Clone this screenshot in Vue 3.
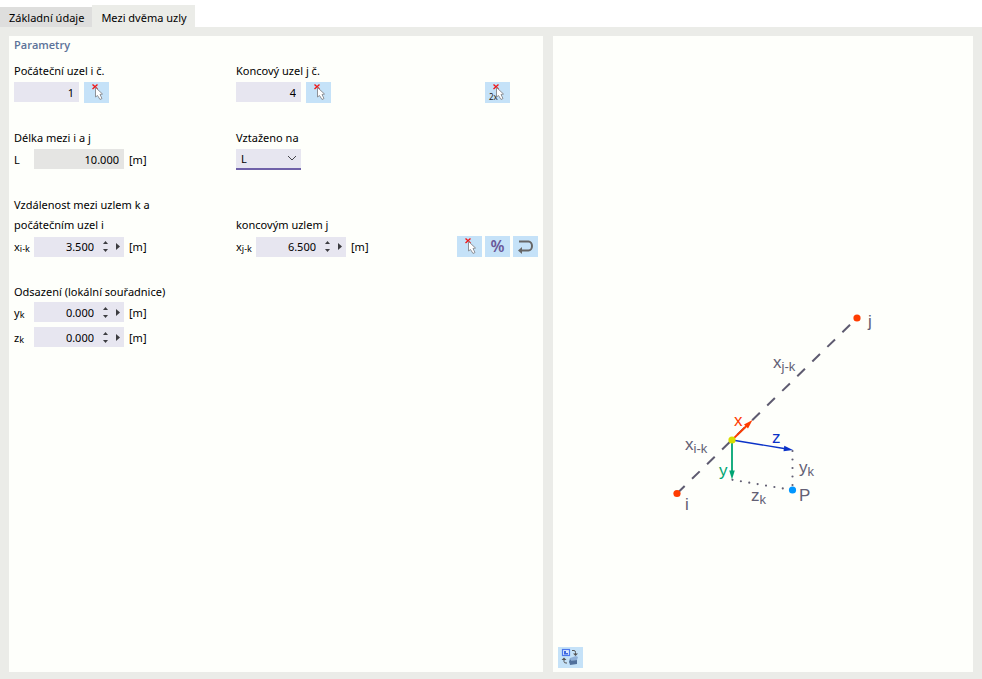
<template>
  <div class="dialog">
    <div class="tabs" role="tablist">
      <button
        v-for="tab in tabs"
        :key="tab.id"
        type="button"
        role="tab"
        class="tab"
        :class="{ active: tab.id === activeTab }"
        :aria-selected="tab.id === activeTab"
        @click="activeTab = tab.id"
      >
        {{ tab.label }}
      </button>
    </div>

    <div class="content">
      <form class="panel params" @submit.prevent>
        <h2 class="title">Parametry</h2>

        <div class="group">
          <div class="cell">
            <label class="label" for="node-i">Počáteční uzel i č.</label>
            <div class="row">
              <input id="node-i" v-model="nodeI" class="box short" type="text" />
              <button type="button" class="icon-btn" aria-label="i">
                <svg viewBox="0 0 25 21">
                  <path class="cross" d="M8.500 2.500l5 4.500M13.500 2.500l-5 4.500" />
                  <path class="cursor" :d="cursorPath" />
                </svg>
              </button>
            </div>
          </div>
          <div class="cell">
            <label class="label" for="node-j">Koncový uzel j č.</label>
            <div class="row">
              <input id="node-j" v-model="nodeJ" class="box short" type="text" />
              <button type="button" class="icon-btn" aria-label="j">
                <svg viewBox="0 0 25 21">
                  <path class="cross" d="M8.500 2.500l5 4.500M13.500 2.500l-5 4.500" />
                  <path class="cursor" :d="cursorPath" />
                </svg>
              </button>
            </div>
          </div>
          <div class="actions">
            <button type="button" class="icon-btn second" aria-label="i, j">
              <svg viewBox="0 0 25 21">
                <path class="cross" d="M8.500 2.500l5 4.500M13.500 2.500l-5 4.500" />
                <text class="twice" x="4" y="18">2x</text>
                <path class="cursor" :d="cursorPath" />
              </svg>
            </button>
          </div>
        </div>

        <div class="group">
          <div class="cell">
            <label class="label" for="length">Délka mezi i a j</label>
            <div class="row">
              <span class="symbol">L</span>
              <input id="length" class="box long" type="text" value="10.000" readonly />
              <span class="unit">[m]</span>
            </div>
          </div>
          <div class="cell">
            <label class="label" for="reference">Vztaženo na</label>
            <div class="row">
              <div class="select">
                <select id="reference" v-model="reference">
                  <option>L</option>
                </select>
                <svg class="chevron" viewBox="0 0 10 6">
                  <path d="M1 1l4 4 4-4" />
                </svg>
              </div>
            </div>
          </div>
        </div>

        <div class="group">
          <p class="label wide">Vzdálenost mezi uzlem k a</p>
          <div v-for="item in distances" :key="item.id" class="cell">
            <label class="label" :for="item.id">{{ item.label }}</label>
            <div class="row">
              <span class="symbol">x<sub>{{ item.sub }}</sub></span>
              <div class="spin">
                <input :id="item.id" v-model="item.value" type="text" />
                <div class="steps">
                  <button type="button" aria-label="+" @click="step(item, 0.1)">
                    <svg viewBox="0 0 5 3"><path d="M0 3L2.500 0 5 3z" /></svg>
                  </button>
                  <button type="button" aria-label="-" @click="step(item, -0.1)">
                    <svg viewBox="0 0 5 3"><path d="M0 0l2.500 3L5 0z" /></svg>
                  </button>
                </div>
                <button type="button" class="more" aria-label="▸">
                  <svg viewBox="0 0 4 7"><path d="M0 0l4 3.500L0 7z" /></svg>
                </button>
              </div>
              <span class="unit">[m]</span>
            </div>
          </div>
          <div class="actions">
            <button type="button" class="icon-btn" aria-label="k">
              <svg viewBox="0 0 25 21">
                <path class="cross" d="M8.500 2.500l5 4.500M13.500 2.500l-5 4.500" />
                <path class="cursor" :d="cursorPath" />
              </svg>
            </button>
            <button type="button" class="icon-btn percent">%</button>
            <button type="button" class="icon-btn" aria-label="↩">
              <svg viewBox="0 0 25 21">
                <path class="return" d="M6 5.500h9.500a3.500 4.500 0 0 1 0 9H8" />
                <path class="return-head" d="M5 14.500l4-3.500v7z" />
              </svg>
            </button>
          </div>
        </div>

        <div class="group">
          <p class="label wide">Odsazení (lokální souřadnice)</p>
          <div v-for="item in offsets" :key="item.id" class="row wide">
            <label class="symbol" :for="item.id">{{ item.axis }}<sub>k</sub></label>
            <div class="spin">
              <input :id="item.id" v-model="item.value" type="text" />
              <div class="steps">
                <button type="button" aria-label="+" @click="step(item, 0.1)">
                  <svg viewBox="0 0 5 3"><path d="M0 3L2.500 0 5 3z" /></svg>
                </button>
                <button type="button" aria-label="-" @click="step(item, -0.1)">
                  <svg viewBox="0 0 5 3"><path d="M0 0l2.500 3L5 0z" /></svg>
                </button>
              </div>
              <button type="button" class="more" aria-label="▸">
                <svg viewBox="0 0 4 7"><path d="M0 0l4 3.500L0 7z" /></svg>
              </button>
            </div>
            <span class="unit">[m]</span>
          </div>
        </div>
      </form>

      <div class="panel preview">
        <svg class="scheme" viewBox="0 0 410 611">
          <!-- origin of the group is node k -->
          <g transform="translate(174 404)">
            <path class="member" d="M-55 53.500L125 -122" />

            <path class="dots" d="M60.500 11v38M0.500 39.800L60 50" />

            <path class="axis-x" d="M0 0L16 -15.500" />
            <path class="head-x" d="M20.500 -20L16 -11.500 12 -15.500z" />
            <path class="axis-y" d="M0 0v31" />
            <path class="head-y" d="M0 39.500l-2.800-9h5.600z" />
            <path class="axis-z" d="M0 0L52 8.500" />
            <path class="head-z" d="M61 10l-9.500 1.200.8-5.400z" />

            <circle class="end" cx="-55" cy="53.500" r="3.600" />
            <circle class="end" cx="125" cy="-122" r="3.600" />
            <circle class="node-k" r="3.600" />
            <circle class="point" cx="60.500" cy="50" r="3.600" />

            <text x="-47" y="70">i</text>
            <text x="136" y="-113">j</text>
            <text x="67" y="61">P</text>
            <text x="41" y="-72">x<tspan class="sub" dy="3">j-k</tspan></text>
            <text x="-47" y="10">x<tspan class="sub" dy="3">i-k</tspan></text>
            <text x="67" y="33">y<tspan class="sub" dy="3">k</tspan></text>
            <text x="19" y="61">z<tspan class="sub" dy="3">k</tspan></text>
            <text class="text-x" x="2" y="-14">x</text>
            <text class="text-y" x="-13" y="36">y</text>
            <text class="text-z" x="40" y="3">z</text>
          </g>
        </svg>
        <button type="button" class="icon-btn" aria-label="⇄">
          <svg viewBox="0 0 25 21">
            <rect class="frame" x="4.500" y="2.500" width="7" height="6" />
            <path class="frame-fill" d="M6 4h2v2h2v1.500H6z" />
            <path class="swap" d="M14 3.500h2q1.500 0 1.500 2v2M6 12v2.500q0 1.500 2 1.500h1" />
            <path class="swap-head" d="M15 6.500h5L17.500 9zM3.500 13L6 10.500 8.500 13z" />
            <path class="solid-light" d="M12 11l6-2 2 1-1 3-6 1z" />
            <path class="solid-dark" d="M11 14l8-1v4l-7 1zM12 11l1 3-2 2z" />
          </svg>
        </button>
      </div>
    </div>
  </div>
</template>

<script setup>
import { ref } from "vue";

const tabs = [
  { id: "base", label: "Základní údaje" },
  { id: "between", label: "Mezi dvěma uzly" },
];
const activeTab = ref("between");

const nodeI = ref("1");
const nodeJ = ref("4");
const reference = ref("L");

const distances = ref([
  { id: "x-ik", label: "počátečním uzel i", sub: "i-k", value: "3.500" },
  { id: "x-jk", label: "koncovým uzlem j", sub: "j-k", value: "6.500" },
]);

const offsets = ref([
  { id: "y-k", axis: "y", value: "0.000" },
  { id: "z-k", axis: "z", value: "0.000" },
]);

const cursorPath = "M11.500 5.500v9.500l2-1.500 2.500 4 2-1-2-4 2.500-.5z";

const step = (item, delta) => {
  item.value = (Number(item.value) + delta).toFixed(3);
};
</script>

<style>
body {
  margin: 0;
  background: #fff;
}
</style>

<style scoped>
.dialog {
  display: flex;
  flex-direction: column;
  min-height: 100vh;
  box-sizing: border-box;
  padding-top: 5px;
  font-family: "Noto Sans", "Open Sans", sans-serif;
  font-size: 11px;
  color: #000;
}

button,
input,
select {
  margin: 0;
  padding: 0;
  border: 0;
  border-radius: 0;
  background: none;
  font: inherit;
  color: inherit;
}

svg {
  display: block;
}

.tabs {
  display: flex;
  align-items: flex-end;
}

.tab {
  height: 20px;
  padding: 0 8px 0 9px;
  background: #dededd;
}

.tab.active {
  height: 22px;
  padding-top: 2px;
  background: #ebece8;
}

.content {
  flex: 1;
  display: grid;
  grid-template-columns: minmax(0, 534fr) minmax(0, 420fr);
  gap: 10px;
  padding: 9px 9px 7px;
  background: #ebece8;
}

.panel {
  box-sizing: border-box;
  padding: 0 5px 4px;
  background: #fefffb;
}

.title {
  margin: 0 0 7px;
  font-family: "Open Sans", "Noto Sans", sans-serif;
  font-size: 11px;
  line-height: 18px;
  font-weight: 600;
  color: #5b7299;
}

.group {
  display: grid;
  grid-template-columns: 222px 1fr auto;
  margin-bottom: 25px;
}

.label {
  display: block;
  margin: 0 0 1px;
  line-height: 20px;
}

.label.wide {
  margin: 0;
}

.wide {
  grid-column: 1 / -1;
}

.row {
  display: flex;
  align-items: center;
  gap: 5px;
  height: 21px;
}

.row.wide {
  height: 20px;
  margin-bottom: 5px;
}

.symbol {
  width: 20px;
  margin-right: -5px;
  white-space: nowrap;
}

.symbol sub {
  font-size: 9px;
  line-height: 0;
  vertical-align: -1px;
}

.box {
  box-sizing: border-box;
  align-self: flex-start;
  height: 20px;
  padding: 0 5px;
  background: #e7e6f0;
  text-align: right;
}

.box.short {
  width: 65px;
}

.box.long {
  width: 90px;
}

.box[readonly] {
  background: #e5e5e3;
}

.spin {
  display: flex;
  width: 90px;
  height: 20px;
  background: #e7e6f0;
}

.spin input {
  flex: 1;
  min-width: 0;
  padding-right: 5px;
  text-align: right;
}

.spin svg {
  margin: 0 auto;
  fill: #3c3c40;
}

.steps {
  display: flex;
  flex-direction: column;
  justify-content: center;
  gap: 5px;
  width: 13px;
}

.steps button {
  display: block;
}

.steps svg {
  width: 5px;
  height: 3px;
}

.more {
  width: 12px;
}

.more svg {
  width: 4px;
  height: 7px;
}

.select {
  position: relative;
}

.select select {
  display: block;
  width: 65px;
  height: 21px;
  padding: 0 5px;
  appearance: none;
  background: #e7e6f0;
  border-bottom: 2px solid #6f61a8;
}

.chevron {
  position: absolute;
  top: 6px;
  right: 4px;
  width: 10px;
  height: 6px;
  fill: none;
  stroke: #44444a;
  pointer-events: none;
}

.actions {
  display: grid;
  grid-template-columns: repeat(3, 25px);
  gap: 3px;
  align-self: end;
}

.icon-btn {
  width: 25px;
  height: 21px;
  background: #c5e2f8;
}

.icon-btn.second {
  grid-column: 2;
}

.icon-btn svg {
  width: 25px;
  height: 21px;
}

.percent {
  font-size: 16px;
  line-height: 21px;
  font-weight: 600;
  color: #6a5899;
}

.cross {
  fill: none;
  stroke: #f01818;
  stroke-width: 1.4;
}

.cursor {
  fill: #fff;
  stroke: #85878c;
  stroke-width: 0.9;
}

.twice {
  font-size: 8px;
  fill: #222;
}

.return {
  fill: none;
  stroke: #666;
  stroke-width: 2;
}

.return-head {
  fill: #666;
}

.frame {
  fill: #dce8fc;
  stroke: #4c78ec;
  stroke-width: 1.2;
}

.frame-fill {
  fill: #3a66e0;
}

.swap {
  fill: none;
  stroke: #555;
}

.swap-head {
  fill: #555;
}

.solid-light {
  fill: #8fb0d8;
}

.solid-dark {
  fill: #50709c;
}

.preview {
  display: flex;
  flex-direction: column;
}

.scheme {
  flex: 1;
  width: 100%;
  min-height: 0;
  font-family: "Liberation Sans", Arial, sans-serif;
  font-size: 17px;
  fill: #636074;
}

.sub {
  font-size: 13px;
}

.member {
  fill: none;
  stroke: #5e5b70;
  stroke-width: 2;
  stroke-dasharray: 10.7 10.3;
}

.dots {
  fill: none;
  stroke: #636074;
  stroke-width: 2.2;
  stroke-linecap: round;
  stroke-dasharray: 0 8.5;
}

.axis-x,
.axis-y,
.axis-z {
  fill: none;
  stroke-width: 1.8;
}

.axis-x {
  stroke: #ff3c00;
}

.axis-y {
  stroke: #00a573;
}

.axis-z {
  stroke: #0a32c8;
  stroke-width: 1.4;
}

.head-x,
.text-x,
.end {
  fill: #ff3c00;
}

.head-y,
.text-y {
  fill: #00a573;
}

.head-z,
.text-z {
  fill: #0a32c8;
}

.node-k {
  fill: #d7dc00;
}

.point {
  fill: #0096ff;
}
</style>
